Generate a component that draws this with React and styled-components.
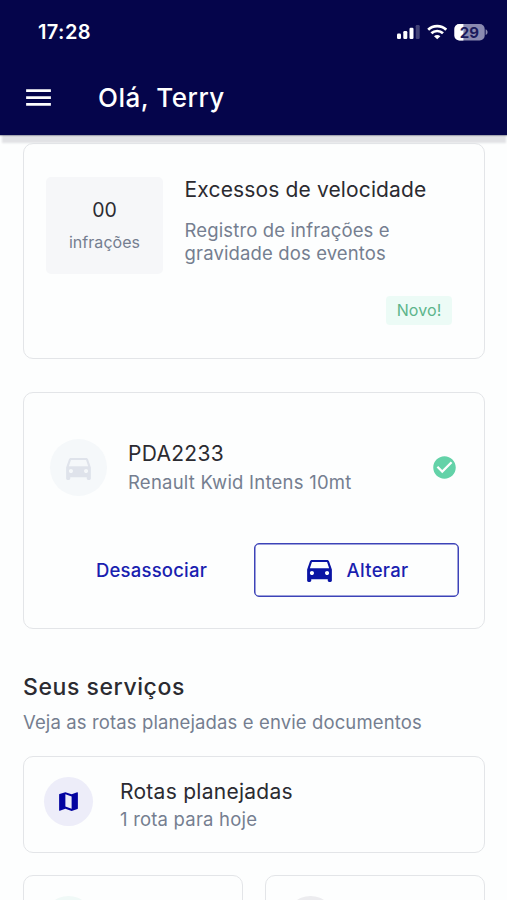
import React from "react";
import styled, { createGlobalStyle } from "styled-components";
import { MdMenu, MdDirectionsCar, MdCheckCircle, MdMap } from "react-icons/md";

const GlobalStyle = createGlobalStyle`
  *, *::before, *::after { box-sizing: border-box; }
  html, body { margin: 0; padding: 0; height: 900px; overflow: hidden; background: #fdfefe; }
  body { font-family: Inter, "Liberation Sans", sans-serif; }
  svg { display: block; flex: none; }
  button { font: inherit; background: none; padding: 0; margin: 0; border: 0; }
`;

const Screen = styled.div`
  width: 507px;
  height: 900px;
  overflow: hidden;
  display: flex;
  flex-direction: column;
  background: #fdfefe;
`;

const Header = styled.header`
  flex: none;
  height: 135px;
  background: #05054b;
  color: #fff;
  box-shadow: 0 1px 1px rgba(20, 24, 50, 0.3), 0 9px 2px -1.5px #e1e2e5;
  position: relative;
  z-index: 1;
`;

const StatusBar = styled.div`
  display: flex;
  align-items: center;
  height: 64px;
  padding: 0 19px 0 38px;
`;

const Indicators = styled.div`
  display: flex;
  align-items: center;
  gap: 7px;
  margin-left: auto;
`;

const TitleBar = styled.div`
  display: flex;
  align-items: center;
  height: 67px;
  padding-left: 22px;
`;

const Text = styled.div`
  font-size: ${(p) => p.$size}px;
  line-height: ${(p) => p.$lh}px;
  letter-spacing: ${(p) => p.$ls || 0}px;
  font-weight: ${(p) => p.$weight || 400};
  color: ${(p) => p.$color || "inherit"};
  white-space: nowrap;
`;

const Greeting = styled(Text)`
  margin-left: 43px;
`;

const Content = styled.main`
  flex: none;
  display: flex;
  flex-direction: column;
  padding: 8px 22px 0 23px;
`;

const Card = styled.section`
  flex: none;
  display: flex;
  height: ${(p) => p.$height}px;
  border: 1px solid #e3e5e8;
  border-radius: 10px;
  background: #fdfefe;
`;

const InfractionCard = styled(Card)`
  padding: 33px 32px 0 22px;
`;

const StatBox = styled.div`
  width: 117px;
  height: 97px;
  padding-top: 19px;
  border-radius: 5px;
  background: #f6f7f9;
  text-align: center;
  flex: none;
`;

const InfractionBody = styled.div`
  flex: 1;
  display: flex;
  flex-direction: column;
  padding: 1px 0 0 21.6px;
`;

const Description = styled(Text)`
  margin-top: 17px;
`;

const Badge = styled.div`
  display: flex;
  align-items: flex-start;
  justify-content: center;
  align-self: flex-end;
  width: 66px;
  height: 29px;
  margin-top: 31px;
  padding-top: 4px;
  border-radius: 4px;
  background: #ecfbf6;
`;

const VehicleCard = styled(Card)`
  flex-direction: column;
  margin-top: 33px;
  padding: 46px 25px 0 26px;
`;

const VehicleRow = styled.div`
  display: flex;
  align-items: center;
  height: 57px;
  padding-right: 1px;
`;

const Bubble = styled.div`
  display: flex;
  align-items: center;
  justify-content: center;
  flex: none;
  width: ${(p) => p.$size}px;
  height: ${(p) => p.$size}px;
  border-radius: 50%;
  background: ${(p) => p.$bg};
  color: ${(p) => p.$fg};
`;

const Labels = styled.div`
  flex: 1;
  padding-left: ${(p) => p.$gap}px;
`;

const Actions = styled.div`
  display: flex;
  margin-top: 47px;
  height: 54px;
  color: #1a1fb0;
`;

const TextButton = styled.button`
  width: 204px;
  padding: 0 1px 1px 0;
  color: inherit;
  display: flex;
  align-items: center;
  justify-content: center;
`;

const OutlineButton = styled.button`
  display: flex;
  align-items: center;
  justify-content: center;
  gap: 11px;
  width: 205px;
  padding: 0 2px 1px 0;
  color: inherit;
  border: 1px solid #3d43b8;
  border-radius: 5px;
  box-shadow: inset 0 0 0 0.5px #3d43b8;
`;

const SectionHead = styled.div`
  display: flex;
  flex-direction: column;
  margin-top: 43px;
`;

const RouteCard = styled(Card)`
  align-items: flex-start;
  margin-top: 13px;
  padding: 20px 20px;
`;

const ServiceGrid = styled.div`
  display: grid;
  grid-template-columns: 220px 220px;
  justify-content: space-between;
  margin-top: 22px;
`;

const ServiceCard = styled(Card)`
  padding: 20px 20px;
`;

const DARK = "#2b2b31";
const MUTED = "#757e90";

function Signal() {
  return (
    <svg width="24" height="16" viewBox="0 0 24 16">
      <g fill="#fff">
        <rect x="1" y="9.6" width="4" height="5.4" rx="1.2" />
        <rect x="7.3" y="7" width="4" height="8" rx="1.2" />
        <rect x="13.5" y="3.8" width="4" height="11.2" rx="1.2" />
        <rect x="19.7" y="1" width="4" height="14" rx="1.2" opacity="0.25" />
      </g>
    </svg>
  );
}

function Wifi() {
  return (
    <svg width="20" height="16" viewBox="0 0 20 16">
      <g fill="none" stroke="#fff" strokeWidth="2.7">
        <path d="M1.2 5.7 C6 0.8 14.4 0.8 19.2 5.7" />
        <path d="M4.4 9.3 C7.6 6.2 12.8 6.2 16 9.3" />
      </g>
      <path d="M10.2 15.2 L7 12.2 C8.8 10.6 11.6 10.6 13.4 12.2 Z" fill="#fff" />
    </svg>
  );
}

function Battery() {
  return (
    <svg width="34" height="17" viewBox="0 0 34 17">
      <rect x="0.4" y="0" width="30.3" height="16.4" rx="5" fill="#8a8ab0" />
      <path d="M9.4 0 V16.4 H5.4 A5 5 0 0 1 0.4 11.4 V5 A5 5 0 0 1 5.4 0 Z" fill="#fff" />
      <path d="M31.6 5.3 C34.2 6.5 34.2 9.9 31.6 11.1 Z" fill="#8a8ab0" />
      <text x="15.4" y="13.6" textAnchor="middle" fontFamily="Inter" fontSize="15" fontWeight="700" fill="#1b1b5c">29</text>
    </svg>
  );
}

export default function App() {
  return (
    <Screen>
      <GlobalStyle />
      <Header>
        <StatusBar>
          <Text $size={20} $lh={24} $ls={0.4} $weight={600}>17:28</Text>
          <Indicators>
            <Signal />
            <Wifi />
            <Battery />
          </Indicators>
        </StatusBar>
        <TitleBar>
          <MdMenu size={33} />
          <Greeting $size={26} $lh={32} $ls={0.5} $weight={500}>Olá, Terry</Greeting>
        </TitleBar>
      </Header>
      <Content>
        <InfractionCard $height={216}>
          <StatBox>
            <Text $size={19.5} $lh={28} $color={DARK}>00</Text>
            <Text $size={16} $lh={36} $ls={0.05} $color={MUTED}>infrações</Text>
          </StatBox>
          <InfractionBody>
            <Text $size={21} $lh={24} $ls={0.14} $color={DARK}>Excessos de velocidade</Text>
            <Description $size={18.5} $lh={23} $ls={0.13} $color={MUTED}>
              Registro de infrações e<br />gravidade dos eventos
            </Description>
            <Badge>
              <Text $size={16} $lh={20} $ls={0.1} $color="#5cb58b">Novo!</Text>
            </Badge>
          </InfractionBody>
        </InfractionCard>

        <VehicleCard $height={237}>
          <VehicleRow>
            <Bubble $size={57} $bg="#f5f8fa" $fg="#dfe3eb"><MdDirectionsCar size={33} /></Bubble>
            <Labels $gap={21}>
              <Text $size={21} $lh={28} $ls={0.3} $color={DARK}>PDA2233</Text>
              <Text $size={18.5} $lh={28} $ls={0.23} $color={MUTED}>Renault Kwid Intens 10mt</Text>
            </Labels>
            <MdCheckCircle size={27} color="#63d2a8" />
          </VehicleRow>
          <Actions>
            <TextButton><Text $size={18.5} $lh={24} $ls={0.2} $weight={500}>Desassociar</Text></TextButton>
            <OutlineButton>
              <MdDirectionsCar size={33} color="#0a14a4" />
              <Text $size={18.5} $lh={24} $ls={0.3} $weight={500}>Alterar</Text>
            </OutlineButton>
          </Actions>
        </VehicleCard>

        <SectionHead>
          <Text $size={23} $lh={30} $ls={0.57} $weight={500} $color={DARK}>Seus serviços</Text>
          <Text $size={18.5} $lh={41} $ls={0.12} $color={MUTED}>Veja as rotas planejadas e envie documentos</Text>
        </SectionHead>

        <RouteCard $height={97}>
          <Bubble $size={49} $bg="#ededf9" $fg="#0404a0"><MdMap size={25} /></Bubble>
          <Labels $gap={27}>
            <Text $size={21} $lh={29} $ls={0.27} $color={DARK}>Rotas planejadas</Text>
            <Text $size={18.5} $lh={27} $ls={0.2} $color={MUTED}>1 rota para hoje</Text>
          </Labels>
        </RouteCard>

        <ServiceGrid>
          <ServiceCard $height={97}><Bubble $size={49} $bg="#f0f9f7" /></ServiceCard>
          <ServiceCard $height={97}><Bubble $size={49} $bg="#ececef" /></ServiceCard>
        </ServiceGrid>
      </Content>
    </Screen>
  );
}
